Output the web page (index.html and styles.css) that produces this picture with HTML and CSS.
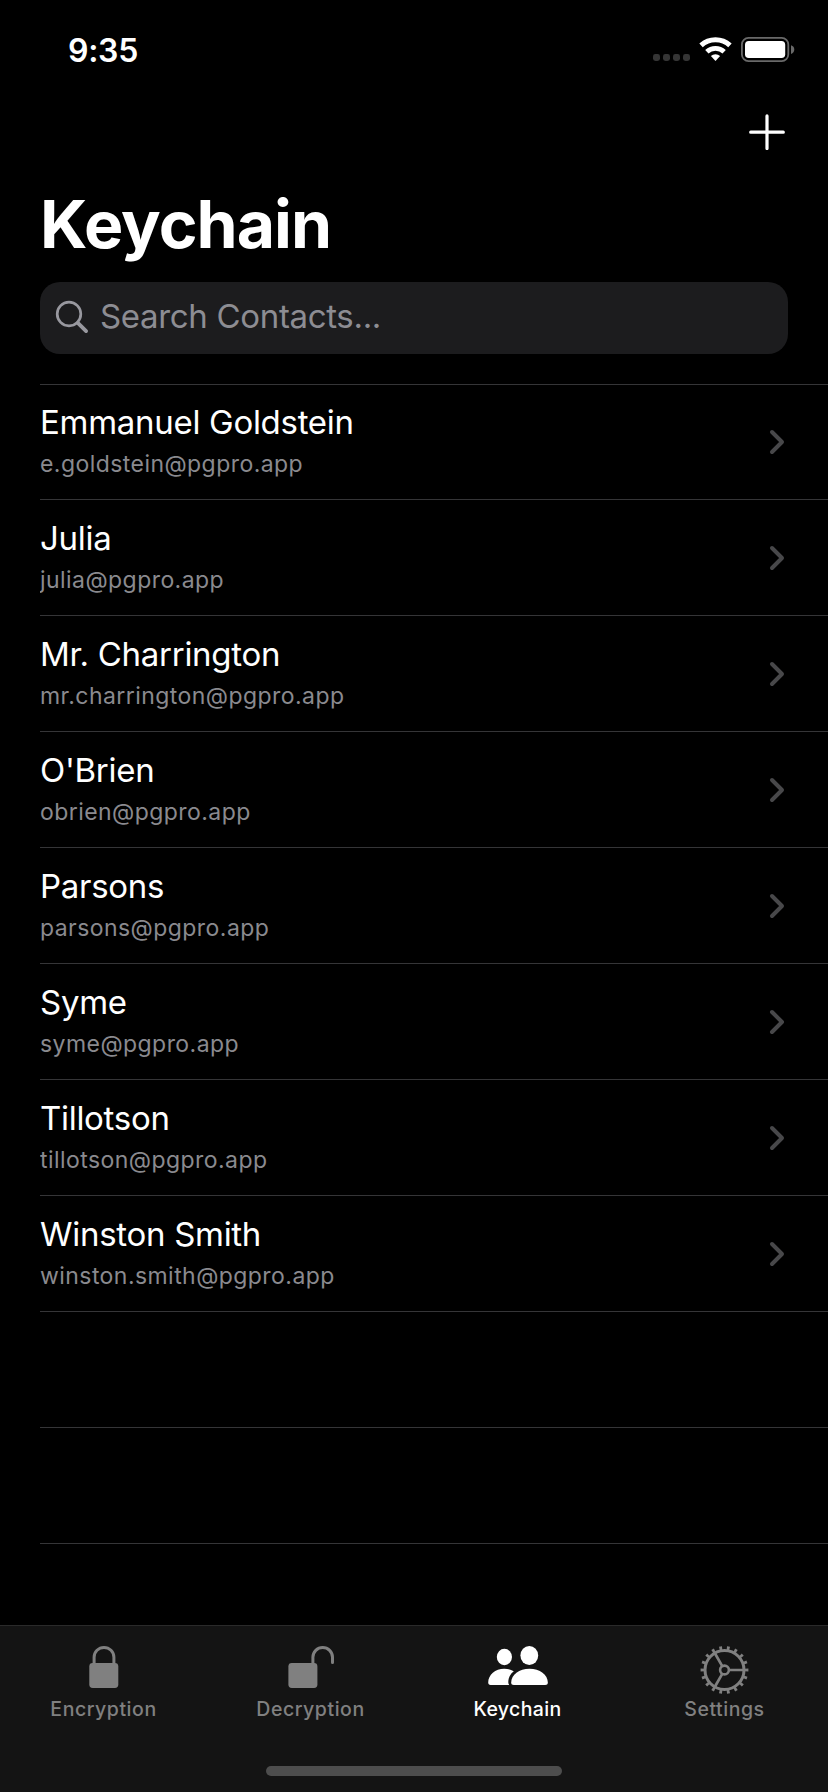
FILE: index.html
```html
<!DOCTYPE html>
<html lang="en">
<head>
<meta charset="utf-8">
<title>Keychain</title>
<link rel="stylesheet" href="styles.css">
</head>
<body>
<div class="screen">
  <header class="status">
    <span class="time">9:35</span>
    <svg class="status-icons" width="142" height="26" viewBox="0 0 142 26">
      <g fill="#353535">
        <rect x="0" y="18" width="7" height="7" rx="2.4"/>
        <rect x="10" y="18" width="7" height="7" rx="2.4"/>
        <rect x="20" y="18" width="7" height="7" rx="2.4"/>
        <rect x="30" y="18" width="7" height="7" rx="2.4"/>
      </g>
      <path d="M48.04 9.4a21.2 21.2 0 0 1 28.92 0" fill="none" stroke="#fff" stroke-width="5"/>
      <path d="M53.84 15.7a12.7 12.7 0 0 1 17.32 0" fill="none" stroke="#fff" stroke-width="4.8"/>
      <path d="M62.5 25l-4.6-4.9a6.7 6.7 0 0 1 9.2 0z" fill="#fff"/>
      <rect x="88.9" y="1.9" width="46.4" height="23.2" rx="6.6" fill="none" stroke="#696969" stroke-width="1.8"/>
      <rect x="92" y="5" width="40.2" height="17" rx="3.8" fill="#fff"/>
      <path d="M138 9.2a4.6 4.6 0 0 1 0 8.8z" fill="#696969"/>
    </svg>
  </header>
  <div class="toolbar">
    <svg width="36" height="36" viewBox="0 0 36 36"><path d="M18 1.9v32.6M1.7 18.2h32.6" stroke="#fff" stroke-width="3.2" stroke-linecap="round"/></svg>
  </div>
  <h1 class="title">Keychain</h1>
  <div class="search">
    <svg width="34" height="34" viewBox="0 0 34 34" fill="none" stroke="#98989f"><circle cx="14" cy="14" r="11.8" stroke-width="2.7"/><path d="M22.8 22.8l8.3 8.3" stroke-width="3.8" stroke-linecap="round"/></svg>
    <span>Search Contacts...</span>
  </div>
  <ul class="list">
    <li class="row"><div><p class="name">Emmanuel Goldstein</p><p class="mail">e.goldstein@pgpro.app</p></div><svg class="chev" viewBox="0 0 16 26"><path d="M3 3l10 10-10 10"/></svg></li>
    <li class="row"><div><p class="name">Julia</p><p class="mail">julia@pgpro.app</p></div><svg class="chev" viewBox="0 0 16 26"><path d="M3 3l10 10-10 10"/></svg></li>
    <li class="row"><div><p class="name">Mr. Charrington</p><p class="mail">mr.charrington@pgpro.app</p></div><svg class="chev" viewBox="0 0 16 26"><path d="M3 3l10 10-10 10"/></svg></li>
    <li class="row"><div><p class="name">O'Brien</p><p class="mail">obrien@pgpro.app</p></div><svg class="chev" viewBox="0 0 16 26"><path d="M3 3l10 10-10 10"/></svg></li>
    <li class="row"><div><p class="name">Parsons</p><p class="mail">parsons@pgpro.app</p></div><svg class="chev" viewBox="0 0 16 26"><path d="M3 3l10 10-10 10"/></svg></li>
    <li class="row"><div><p class="name">Syme</p><p class="mail">syme@pgpro.app</p></div><svg class="chev" viewBox="0 0 16 26"><path d="M3 3l10 10-10 10"/></svg></li>
    <li class="row"><div><p class="name">Tillotson</p><p class="mail">tillotson@pgpro.app</p></div><svg class="chev" viewBox="0 0 16 26"><path d="M3 3l10 10-10 10"/></svg></li>
    <li class="row"><div><p class="name">Winston Smith</p><p class="mail">winston.smith@pgpro.app</p></div><svg class="chev" viewBox="0 0 16 26"><path d="M3 3l10 10-10 10"/></svg></li>
    <li class="row"></li>
    <li class="row"></li>
  </ul>
  <footer class="footer">
    <nav class="tabs">
      <div class="tab">
        <svg class="icon" viewBox="0 0 62 50"><rect x="16.3" y="18" width="29" height="25" rx="3.4" fill="currentColor"/><path d="M21.1 19.5V12.3a9.9 9.9 0 0 1 19.8 0v7.2" fill="none" stroke="currentColor" stroke-width="3"/></svg>
        <span>Encryption</span>
      </div>
      <div class="tab">
        <svg class="icon" viewBox="0 0 62 50"><rect x="8.4" y="18" width="29" height="25" rx="3.4" fill="currentColor"/><path d="M32.9 19.5V12.3a9.8 9.8 0 0 1 19.6 0v5.3" fill="none" stroke="currentColor" stroke-width="3" stroke-linecap="round"/></svg>
        <span>Decryption</span>
      </div>
      <div class="tab active">
        <svg class="icon" viewBox="0 0 62 50" fill="currentColor"><ellipse cx="17.4" cy="12" rx="7.6" ry="8.3"/><ellipse cx="42.3" cy="10.5" rx="8.9" ry="9.5"/><path d="M24.2 37.5C24.2 29.5 32.2 23.7 42.5 23.7S60.8 29.5 60.8 37.5C60.8 39.3 59.9 40 58.2 40H26.8C25.1 40 24.2 39.3 24.2 37.5Z"/><path d="M22.2 40H3.6C2 40 1.2 39.3 1.2 37.6C1.2 29.8 8.3 23.7 17.2 23.7C20.8 23.7 24.1 24.7 26.8 26.3C23 29.2 21.3 33 21.3 37.2C21.3 38.3 21.6 39.3 22.2 40Z"/></svg>
        <span>Keychain</span>
      </div>
      <div class="tab">
        <svg class="icon" viewBox="0 0 62 50" fill="none" stroke="currentColor"><circle cx="30.5" cy="25" r="19.5" stroke-width="3"/><circle cx="30.5" cy="25" r="22" stroke-width="3.8" pathLength="180" stroke-dasharray="3.6 6.4" stroke-dashoffset="1.8"/><circle cx="30.5" cy="25" r="4.4" stroke-width="2.6"/><path d="M35.3 25H49.5M28.1 20.85L21 8.5M28.1 29.15L21 41.5" stroke-width="2.7"/></svg>
        <span>Settings</span>
      </div>
    </nav>
    <div class="home"></div>
  </footer>
</div>
</body>
</html>
```
FILE: styles.css
```css
* { box-sizing: border-box; }
body, h1, p, ul { margin: 0; padding: 0; }
body { background: #000; color: #fff; font-family: Inter, "Liberation Sans", sans-serif; }

.screen { display: flex; flex-direction: column; width: 828px; height: 1792px; overflow: hidden; }

.status { display: flex; justify-content: space-between; align-items: flex-start; height: 88px; padding: 30px 33px 0 68px; }
.time { margin-top: 1px; font-size: 32px; font-weight: 600; line-height: 40px; letter-spacing: -0.3px; }
.status-icons { margin-top: 6px; }

.toolbar { display: flex; justify-content: flex-end; align-items: flex-start; height: 96px; padding: 26px 43.5px 0 0; }

.title { height: 98px; padding-left: 40px; font-size: 66px; font-weight: 700; line-height: 80px; letter-spacing: -0.95px; }

.search { display: flex; align-items: flex-start; gap: 11px; height: 72px; margin: 0 40px 30px; padding: 14px 15px 0; border-radius: 20px; background: #1c1c1e; color: #8d8d93; font-size: 33px; line-height: 40px; letter-spacing: -0.33px; }
.search svg { flex: none; margin-top: 4px; }

.list { flex: 1; min-height: 0; overflow: hidden; margin-left: 40px; list-style: none; box-shadow: inset 0 1px #353537; }
.row { display: flex; justify-content: space-between; height: 116px; padding: 18px 43px 0 0; border-bottom: 1px solid #353537; }
.name { font-size: 33px; line-height: 40px; letter-spacing: -0.29px; }
.mail { margin-top: 8px; color: #8a8a8f; font-size: 23px; line-height: 28px; letter-spacing: 0.44px; }
.chev { width: 16px; height: 26px; margin-top: 27px; fill: none; stroke: #48484a; stroke-width: 4; stroke-linecap: round; stroke-linejoin: round; }

.footer { display: flex; flex-direction: column; align-items: center; flex: none; height: 167px; border-top: 1px solid #2a2a2a; background: #141414; }
.tabs { display: grid; grid-template-columns: repeat(4, 1fr); width: 100%; height: 140px; padding-top: 19px; }
.tab { display: flex; flex-direction: column; align-items: center; color: #808080; font-size: 19.5px; font-weight: 500; line-height: 24px; letter-spacing: 0.54px; }
.tab.active { color: #fff; letter-spacing: 0.35px; }
.icon { width: 62px; height: 50px; margin-bottom: 2px; }
.home { width: 296px; height: 10px; border-radius: 5px; background: #4d4d4d; }
```
